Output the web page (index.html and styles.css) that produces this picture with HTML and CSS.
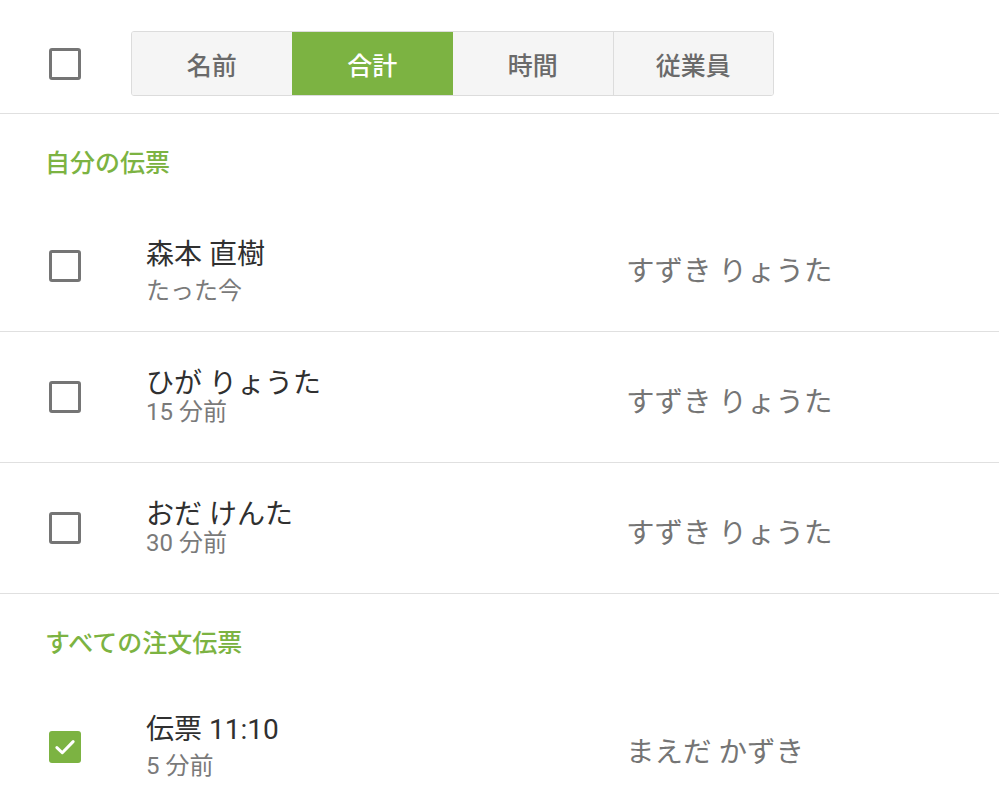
FILE: index.html
```html
<!DOCTYPE html>
<html lang="ja">
<head>
  <meta charset="UTF-8" />
  <meta name="viewport" content="width=device-width, initial-scale=1" />
  <title>伝票</title>
  <link rel="stylesheet" href="styles.css">
</head>
<body>

  <div class="toolbar">
    <span class="check"></span>
    <div class="tabs">
      <button class="tab">名前</button>
      <button class="tab active">合計</button>
      <button class="tab">時間</button>
      <button class="tab">従業員</button>
    </div>
  </div>

  <h2 class="section-title">自分の伝票</h2>

  <div class="row">
    <span class="check"></span>
    <div class="info tall first">
      <div class="name">森本 直樹</div>
      <div class="sub">たった今</div>
    </div>
    <div class="staff">すずき りょうた</div>
  </div>

  <div class="row">
    <span class="check"></span>
    <div class="info">
      <div class="name">ひが りょうた</div>
      <div class="sub">15 分前</div>
    </div>
    <div class="staff">すずき りょうた</div>
  </div>

  <div class="row">
    <span class="check"></span>
    <div class="info">
      <div class="name">おだ けんた</div>
      <div class="sub">30 分前</div>
    </div>
    <div class="staff">すずき りょうた</div>
  </div>

  <h2 class="section-title">すべての注文伝票</h2>

  <div class="row">
    <span class="check checked">
      <svg viewBox="0 0 24 24" width="26" height="26"><path d="M4.5 12.5l5 4.8L19.5 7" fill="none" stroke="#fff" stroke-width="2.8" stroke-linecap="round" stroke-linejoin="round"/></svg>
    </span>
    <div class="info tall">
      <div class="name">伝票 11:10</div>
      <div class="sub">5 分前</div>
    </div>
    <div class="staff">まえだ かずき</div>
  </div>

</body>
</html>
```

FILE: styles.css
```css
* {
  margin: 0;
  padding: 0;
  box-sizing: border-box;
}
html, body {
  background: #fff;
  font-family: Roboto, "Noto Sans CJK JP", sans-serif;
  overflow: hidden;
}

.check {
  width: 32px;
  height: 32px;
  flex: none;
  border: 3px solid #757575;
  border-radius: 3px;
  display: flex;
  align-items: center;
  justify-content: center;
}
.check.checked {
  border: none;
  background: #7cb342;
}

.toolbar {
  display: flex;
  align-items: center;
  gap: 50px;
  padding: 31px 0 17px 49px;
  border-bottom: 1px solid #e0e0e0;
}
.tabs {
  display: flex;
  width: 643px;
  height: 65px;
  border: 1px solid #dcdcdc;
  border-radius: 3px;
  overflow: hidden;
}
.tab {
  flex: 1;
  border: none;
  border-left: 1px solid #dcdcdc;
  background: #f5f5f5;
  color: #6a6a6a;
  font-family: inherit;
  font-size: 25px;
  font-weight: 500;
  cursor: pointer;
}
.tab:first-child {
  border-left: none;
}
.tab.active {
  background: #7cb342;
  border-left-color: #7cb342;
  color: #fff;
}
.tab.active + .tab {
  border-left-color: #7cb342;
}

.section-title {
  height: 87px;
  padding: 37px 0 0 45px;
  font-size: 25px;
  line-height: 26px;
  font-weight: 500;
  color: #7cb342;
}

.row {
  display: flex;
  align-items: center;
  height: 131px;
  padding-left: 49px;
  border-bottom: 1px solid #e0e0e0;
}
.row:last-child {
  border-bottom: none;
}
.info {
  width: 480px;
  margin-left: 65px;
}
.info.first {
  padding-top: 12px;
}
.name {
  font-size: 28px;
  line-height: 30px;
  color: #303030;
}
.sub {
  font-size: 24px;
  line-height: 26px;
  color: #7a7a7a;
}
.info.tall .sub {
  margin-top: 8px;
}
.staff {
  padding-top: 12px;
  font-size: 28.5px;
  line-height: 30px;
  color: #757575;
}
```
